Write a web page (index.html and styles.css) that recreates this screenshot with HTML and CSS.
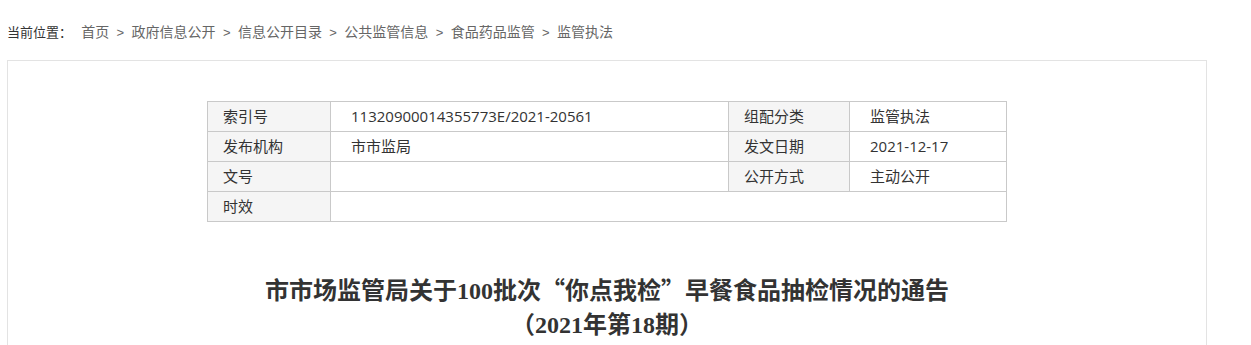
FILE: index.html
```html
<!DOCTYPE html>
<html lang="zh-CN">
<head>
<meta charset="utf-8">
<title>监管执法</title>
<link rel="stylesheet" href="styles.css">
</head>
<body>
<div class="crumb">
  <span class="crumb-label">当前位置：</span>
  <a class="crumb-link" href="#">首页</a><span class="sep">&gt;</span><a class="crumb-link" href="#">政府信息公开</a><span class="sep">&gt;</span><a class="crumb-link" href="#">信息公开目录</a><span class="sep">&gt;</span><a class="crumb-link" href="#">公共监管信息</a><span class="sep">&gt;</span><a class="crumb-link" href="#">食品药品监管</a><span class="sep">&gt;</span><a class="crumb-link" href="#">监管执法</a>
</div>
<div class="box">
  <table class="meta">
    <colgroup>
      <col class="c1"><col class="c2"><col class="c3"><col class="c4">
    </colgroup>
    <tr><th>索引号</th><td>11320900014355773E/2021-20561</td><th>组配分类</th><td>监管执法</td></tr>
    <tr><th>发布机构</th><td>市市监局</td><th>发文日期</th><td>2021-12-17</td></tr>
    <tr><th>文号</th><td></td><th>公开方式</th><td>主动公开</td></tr>
    <tr><th>时效</th><td colspan="3"></td></tr>
  </table>
  <h1 class="title">市市场监管局关于100批次<span class="q">“</span>你点我检<span class="q">”</span>早餐食品抽检情况的通告<br>（2021年第18期）</h1>
</div>
</body>
</html>
```
FILE: styles.css
```css
html, body {
  margin: 0;
  padding: 0;
  background: #fff;
}
body {
  font-family: "Noto Sans CJK SC", "Noto Sans", sans-serif;
  color: #333;
}
.crumb {
  padding: 21px 0 19px 7px;
  font-size: 14px;
  line-height: 20px;
  height: 20px;
  white-space: nowrap;
}
.crumb-label {
  font-size: 13px;
  color: #333;
  margin-right: 6px;
}
.crumb-link {
  color: #666;
  text-decoration: none;
}
.sep {
  color: #666;
  margin: 0 7.4px;
  font-size: 13px;
  font-family: "Liberation Sans", sans-serif;
}
.box {
  width: 1198px;
  margin-left: 7px;
  border: 1px solid #e3e3e3;
  border-bottom: none;
  padding-top: 40px;
  height: 400px;
}
.meta {
  width: 799px;
  margin: 0 0 0 199px;
  border-collapse: collapse;
  table-layout: fixed;
  font-size: 15px;
  color: #333;
}
.c1 { width: 123px; }
.c2 { width: 398px; }
.c3 { width: 121px; }
.c4 { width: 157px; }
.meta th,
.meta td {
  border: 1px solid #c9c9c9;
  height: 27px;
  padding: 0 0 2px;
  line-height: 20px;
  text-align: left;
  font-weight: normal;
  white-space: nowrap;
}
.meta th {
  background: #f5f5f5;
  padding-left: 15px;
}
.meta td {
  padding-left: 20px;
  font-family: "Open Sans", "Noto Sans CJK SC", sans-serif;
}
.title {
  margin: 50px 0 0;
  text-align: center;
  font-family: "Liberation Serif", "Noto Sans CJK SC", serif;
  font-size: 24px;
  line-height: 34px;
  font-weight: 600;
  color: #333;
}
.q {
  font-family: "Noto Sans CJK SC", sans-serif;
}
```
